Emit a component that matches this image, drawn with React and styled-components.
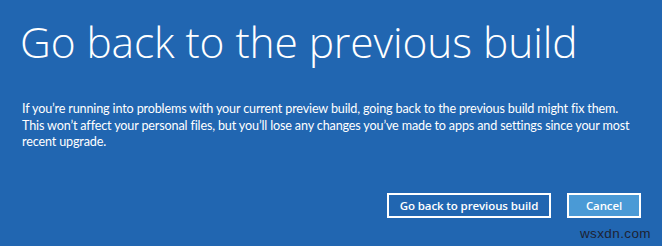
import React from 'react'
import styled, { createGlobalStyle } from 'styled-components'

const background = '#2166b1'

const GlobalStyle = createGlobalStyle`
  html, body {
    margin: 0;
    padding: 0;
    background: ${background};
  }
  body {
    font-family: 'Open Sans', 'Noto Sans', sans-serif;
    color: #fff;
  }
`

const Screen = styled('div')`
  position: relative;
  box-sizing: border-box;
  width: 662px;
  height: 246px;
  padding: 14px 21px 0 22px;
  display: flex;
  flex-direction: column;
  background: ${background};
  overflow: hidden;
`

const Title = styled('h1')`
  margin: 0 0 0 -2px;
  font-weight: 300;
  font-size: 42.5px;
  line-height: 56px;
  letter-spacing: -0.1px;
  white-space: nowrap;
`

const Body = styled('div')`
  margin-top: 31px;
  max-width: 615px;
  font-family: Lato, 'Open Sans', sans-serif;
  font-size: 12.6px;
  line-height: 16px;
  letter-spacing: -0.15px;
  p {
    margin: 0 0 1px;
  }
`

const Actions = styled('div')`
  margin-top: auto;
  margin-bottom: 28px;
  display: flex;
  justify-content: flex-end;
  gap: 16px;
`

const Button = styled('button')`
  box-sizing: border-box;
  height: 25px;
  width: ${props => (props.primary ? '74px' : '164px')};
  padding: 0;
  border: 2px solid #fff;
  background: ${props => (props.primary ? '#4a9ad6' : background)};
  color: #fff;
  font-family: 'Open Sans', 'Noto Sans', sans-serif;
  font-weight: 600;
  font-size: 11.5px;
  letter-spacing: -0.1px;
  cursor: pointer;
`

const Watermark = styled('span')`
  position: absolute;
  right: 11px;
  bottom: 5px;
  color: #1d2333;
  font-family: 'Liberation Sans', Arial, sans-serif;
  font-size: 13.5px;
  letter-spacing: 0.4px;
`

export default function App () {
  return (
    <Screen>
      <GlobalStyle />
      <Title>Go back to the previous build</Title>
      <Body>
        <p>
          If you’re running into problems with your current preview build, going back to the
          previous build might fix them.
        </p>
        <p>
          This won’t affect your personal files, but you’ll lose any changes you’ve made to apps
          and settings since your most recent upgrade.
        </p>
      </Body>
      <Actions>
        <Button>Go back to previous build</Button>
        <Button primary>Cancel</Button>
      </Actions>
      <Watermark>wsxdn.com</Watermark>
    </Screen>
  )
}
